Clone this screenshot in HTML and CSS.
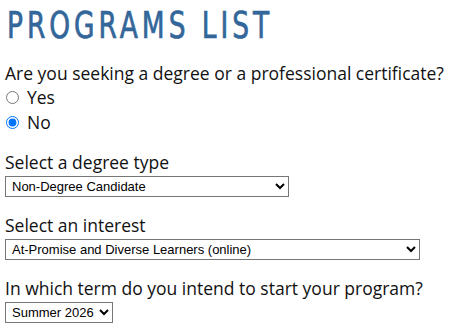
FILE: index.html
```html
<!DOCTYPE html>
<html>
<head>
    <meta charset="UTF-8">
    <meta name="viewport" content="width=device-width, initial-scale=1.0">
    <link rel="stylesheet" href="styles.css">
</head>
<body>
    <div class="page">
        <h1 class="title"><span>PROGRAMS LIST</span></h1>

        <div class="field choice">
            <div class="label">Are you seeking a degree or a professional certificate?</div>
            <label class="radio"><input type="radio" name="seeking" value="yes"> Yes</label>
            <label class="radio"><input type="radio" name="seeking" value="no" checked> No</label>
        </div>

        <div class="field">
            <div class="label">Select a degree type</div>
            <select class="select degree">
                <option>Non-Degree Candidate</option>
            </select>
        </div>

        <div class="field">
            <div class="label">Select an interest</div>
            <select class="select interest">
                <option>At-Promise and Diverse Learners (online)</option>
            </select>
        </div>

        <div class="field">
            <div class="label">In which term do you intend to start your program?</div>
            <select class="select">
                <option>Summer 2026</option>
            </select>
        </div>
    </div>
</body>
</html>
```

FILE: styles.css
```css
* {
    margin: 0;
    padding: 0;
    box-sizing: border-box;
}

body {
    font-family: 'Open Sans', sans-serif;
    font-size: 17.5px;
    color: #111;
    background: #fff;
}

.page {
    padding: 0 5px;
}

.title {
    font-family: 'DejaVu Sans Condensed', 'DejaVu Sans', sans-serif;
    font-stretch: condensed;
    font-weight: normal;
    font-size: 37px;
    color: #336699;
    -webkit-text-stroke: 0.7px #336699;
    letter-spacing: 5px;
    line-height: 52px;
    height: 61px;
    padding-left: 2px;
}

.title span {
    display: inline-block;
    transform: scaleX(0.795);
    transform-origin: left center;
}

.field {
    margin-bottom: 16px;
}

.choice {
    margin-bottom: 15px;
}

.label {
    line-height: 24px;
}

.radio {
    display: flex;
    align-items: center;
    gap: 8px;
    line-height: 25px;
}

.radio input {
    margin: 0 0 0 1px;
    width: 13px;
    height: 13px;
}

.select {
    display: block;
    margin-top: 2px;
    font-family: 'Liberation Sans', Arial, sans-serif;
    font-size: 13px;
    color: #000;
    height: 21px;
    border: 1px solid #767676;
    background: #fff;
    padding: 0 2px;
}

.degree {
    width: 284px;
}

.interest {
    width: 415px;
}
```
